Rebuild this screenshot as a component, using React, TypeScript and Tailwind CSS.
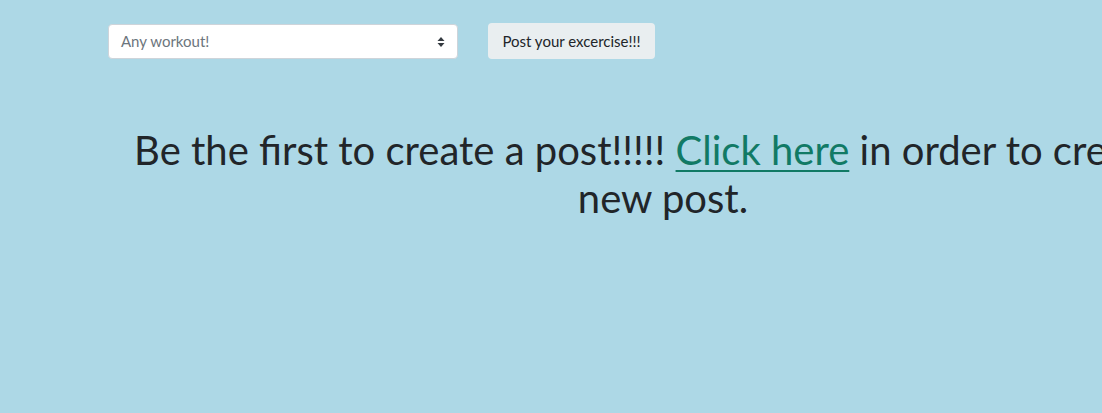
import React from "react";

export default function App() {
  return (
    <div
      className="w-[1102px] h-[413px] overflow-hidden bg-[#add8e6]"
      style={{ fontFamily: "Lato, 'Open Sans', sans-serif" }}
    >
      <div className="pt-[24px] pl-[108px] flex items-start">
        <div className="w-[350px] h-[35px] bg-white border border-[#ced4da] rounded-[4px] flex items-center justify-between pl-[12px] pr-[12px]">
          <span className="text-[15px] text-[#6c757d]">Any workout!</span>
          <svg width="8" height="12" viewBox="0 0 8 12" className="text-[#343a40]">
            <path d="M4 1 L7.5 5 H0.5 Z" fill="currentColor" />
            <path d="M4 11 L7.5 7 H0.5 Z" fill="currentColor" />
          </svg>
        </div>
        <button className="ml-[30px] -mt-[1px] h-[36px] w-[167px] rounded-[4px] bg-[#e9eef0] text-[15px] text-[#212529] flex items-center justify-center">
          Post your excercise!!!
        </button>
      </div>
      <div className="ml-[108px] w-[1110px] mt-[67px]">
        <h1 className="text-center text-[40px] leading-[48px] text-[#212529]">
          Be the first to create a post!!!!!{" "}
          <a className="text-[#117a65] underline decoration-[2px] underline-offset-[5px]" href="#">
            Click here
          </a>{" "}
          in order to create a new post.
        </h1>
      </div>
    </div>
  );
}
